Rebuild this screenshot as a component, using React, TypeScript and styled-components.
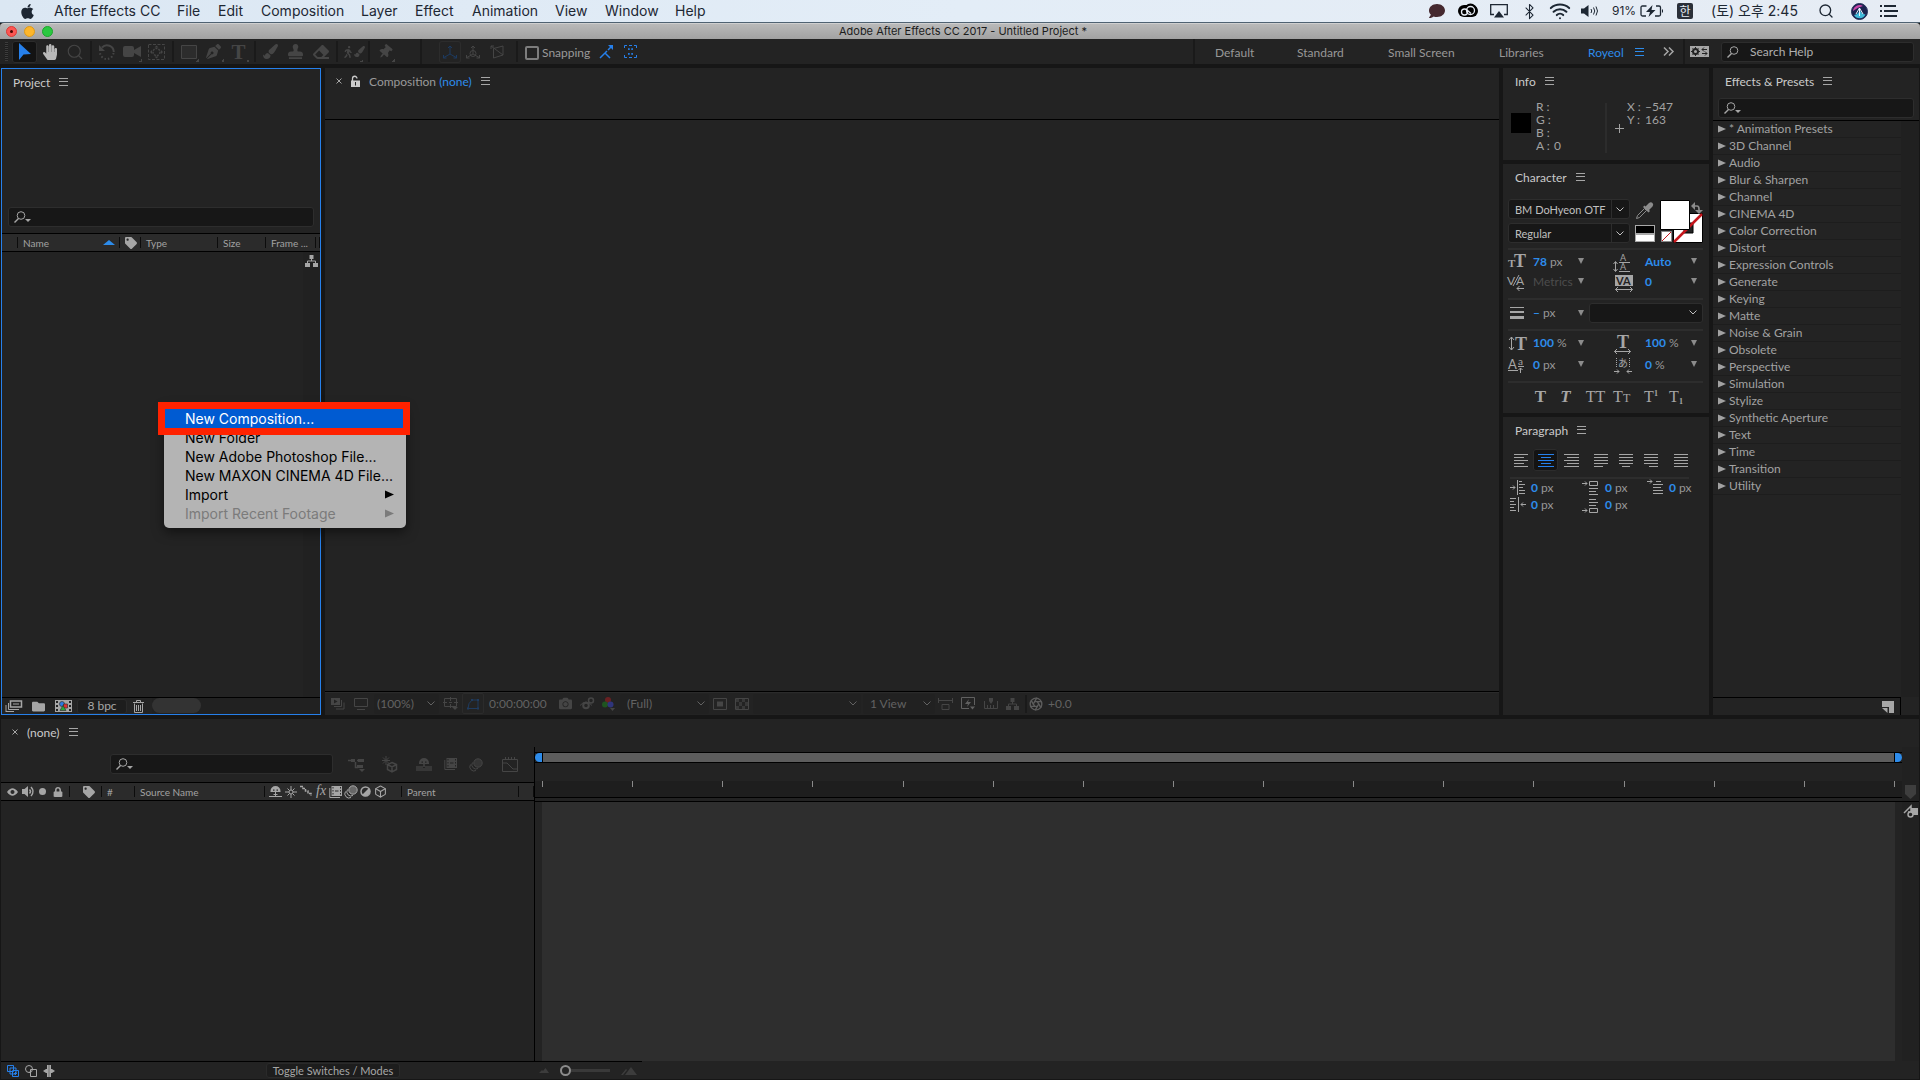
import React from 'react';
import styled, { createGlobalStyle, css } from 'styled-components';
import {
  FaApple,
  FaCamera,
  FaComment,
  FaEraser,
  FaFolder,
  FaHandPaper,
  FaLock,
  FaPaintBrush,
  FaPenNib,
  FaStamp,
  FaTag,
  FaThumbtack,
  FaWalking,
} from 'react-icons/fa';
import { Aperture, Bluetooth, Box, Search, Wifi } from 'lucide-react';

const c = {
  bg: '#232323',
  gutter: '#161616',
  field: '#171717',
  edge: '#2d2d2d',
  head: '#2b2b2b',
  black: '#000000',
  text: '#a2a2a2',
  bright: '#cacaca',
  icon: '#a6a6a6',
  off: '#454545',
  blue: '#2d8ceb',
};

const ui = `Lato, "Noto Sans", sans-serif`;
const mac = `Inter, "Noto Sans CJK KR", sans-serif`;

const GlobalStyle = createGlobalStyle`
  *, *::before, *::after { box-sizing: border-box; }
  body { margin: 0; background: ${c.gutter}; font-family: ${ui}; font-size: 12px; color: ${c.text}; }
  button, input, select { font: inherit; color: inherit; margin: 0; padding: 0; border: 0; background: none; outline: none; }
  ul { list-style: none; margin: 0; padding: 0; }
  h1, h2 { margin: 0; font-size: inherit; font-weight: inherit; }
  svg { display: block; flex: none; overflow: visible; }
`;

const Shell = styled.div`
  min-height: 100vh;
  display: flex;
  flex-direction: column;
`;

/* ---------- system menu bar ---------- */

const MenuBar = styled.header`
  height: 23px;
  display: flex;
  align-items: center;
  padding: 0 22px 0 19px;
  background: linear-gradient(90deg, #dbe7f3, #e3edf7 50%, #e6ecf4);
  border-bottom: 1px solid #4f6272;
  font: 14px/22px ${mac};
  color: #1d2733;
`;

const Menus = styled.nav`
  display: flex;
  gap: 19px;
  margin-left: 18px;
  flex: 1;
`;

const MenuButton = styled.button<{ $w: number }>`
  width: ${(p) => p.$w}px;
  text-align: left;
  white-space: nowrap;
`;

const Status = styled.div`
  display: flex;
  align-items: center;
`;

const Slot = styled.div<{ $w: number; $boxed?: boolean }>`
  width: ${(p) => p.$w}px;
  height: 21px;
  flex: none;
  display: flex;
  align-items: center;
  justify-content: center;
  ${(p) =>
    p.$boxed &&
    css`
      border: 1px solid #2b2b2b;
      border-radius: 2px;
    `}
`;

const Cell = styled.div`
  width: 15px;
  height: 16px;
  display: grid;
  place-items: center;
`;

const Percent = styled.span`
  width: 28px;
  font-size: 12px;
`;

const ImeBadge = styled.span`
  width: 16px;
  height: 16px;
  border-radius: 2px;
  background: #2a2f38;
  color: #e6ecf4;
  font: 12px/15px "Noto Sans CJK KR", sans-serif;
  text-align: center;
`;

const Clock = styled.span`
  width: 97px;
  text-align: center;
  white-space: nowrap;
`;

/* ---------- window title ---------- */

const TitleBar = styled.div`
  height: 16px;
  display: grid;
  grid-template-columns: 1fr auto 1fr;
  align-items: center;
  padding-left: 6px;
  background: linear-gradient(#b9b9b9, #a2a2a2);
  border-top: 1px solid #cfcfcf;
  border-radius: 4px 4px 0 0;
  font: 11px/15px ${mac};
  color: #1c1c1c;
`;

const Lights = styled.div`
  display: flex;
  gap: 7px;
`;

const Light = styled.button<{ $c: string; $e: string }>`
  width: 11px;
  height: 11px;
  border-radius: 50%;
  background: ${(p) => p.$c};
  border: 1px solid ${(p) => p.$e};
  display: grid;
  place-items: center;
`;

const Dot = styled.i`
  width: 3px;
  height: 3px;
  border-radius: 50%;
  background: #4a0502;
`;

/* ---------- tool bar ---------- */

const ToolBar = styled.div`
  height: 25px;
  display: flex;
  align-items: center;
  background: ${c.bg};
  padding: 0 6px 0 5px;
`;

const Grip = styled.div`
  width: 3px;
  height: 19px;
  margin-right: 4px;
  background: repeating-linear-gradient(#3c3c3c 0 1px, #1c1c1c 1px 2px);
`;

const Tool = styled.button<{ $on?: boolean; $w?: number; $c?: string; $ring?: boolean }>`
  width: ${(p) => p.$w ?? 25}px;
  height: 22px;
  flex: none;
  display: grid;
  place-items: center;
  color: ${(p) => p.$c ?? c.off};
  border-radius: 3px;
  ${(p) => (p.$on || p.$ring) && 'box-shadow: inset 0 0 0 1px #2c2c2c;'}
  ${(p) => p.$on && 'background: #131313;'}
`;

const Flyout = styled.span`
  display: grid;
  place-items: center;
  width: 21px;
  height: 20px;
  background: linear-gradient(135deg, transparent 50%, ${c.off} 50%) right bottom / 3px 3px no-repeat;
`;

const Letter = styled.span<{ $s: number; $italic?: boolean; $light?: boolean }>`
  font: ${(p) => (p.$italic ? 'italic' : 'normal')} ${(p) => (p.$light ? 400 : 700)} ${(p) => p.$s}px/20px
    "Liberation Serif", serif;
`;

const Sep = styled.div<{ $h?: number }>`
  width: 7px;
  height: ${(p) => p.$h ?? 21}px;
  flex: none;
  background: linear-gradient(#1a1a1a, #1a1a1a) 3px 0 / 2px 100% no-repeat;
`;

const Spacer = styled.div<{ $w?: number }>`
  ${(p) => (p.$w ? `width: ${p.$w}px; flex: none;` : 'flex: 1;')}
`;

const Check = styled.label`
  display: flex;
  align-items: center;
  gap: 3px;
  width: 71px;
  padding-top: 2px;
  font-size: 12px;
  color: #9a9a9a;
`;

const Tick = styled.input`
  appearance: none;
  width: 14px;
  height: 14px;
  flex: none;
  border: 2px solid #7d7d7d;
  border-radius: 2px;
`;

const Workspace = styled.button<{ $w: number; $on?: boolean }>`
  width: ${(p) => p.$w}px;
  padding-top: 2px;
  text-align: left;
  white-space: nowrap;
  color: ${(p) => (p.$on ? c.blue : '#989898')};
`;

const Field = styled.label<{ $w?: number }>`
  ${(p) => p.$w && `width: ${p.$w}px;`}
  height: 20px;
  display: flex;
  align-items: center;
  gap: 6px;
  padding-left: 5px;
  background: ${c.field};
  border: 1px solid ${c.edge};
  border-radius: 3px;
  color: ${c.icon};
`;

const TextInput = styled.input`
  flex: 1;
  min-width: 0;
  font-size: 12px;
  color: #b0b0b0;
  &::placeholder {
    color: #b0b0b0;
    opacity: 1;
  }
`;

/* ---------- panels ---------- */

const Workarea = styled.main`
  flex: 1;
  display: flex;
  flex-direction: column;
  gap: 4px;
  padding: 4px 1px 1px;
`;

const TopRow = styled.div`
  display: flex;
  gap: 4px;
  height: 60vh;
  min-height: 647px;
  max-height: 647px;
`;

const Panel = styled.section<{ $w?: number; $h?: number; $focus?: boolean }>`
  display: flex;
  flex-direction: column;
  background: ${c.bg};
  min-width: 0;
  ${(p) => (p.$w ? `width: ${p.$w}px; flex: none;` : p.$h ? `height: ${p.$h}px; flex: none;` : 'flex: 1;')}
  ${(p) => p.$focus && 'border: 1px solid #2680eb;'}
`;

const Column = styled.div`
  width: 206px;
  flex: none;
  display: flex;
  flex-direction: column;
  gap: 4px;
`;

const Tab = styled.div<{ $pad?: number }>`
  height: 26px;
  margin-bottom: 2px;
  flex: none;
  display: flex;
  align-items: center;
  gap: 9px;
  padding-left: ${(p) => p.$pad ?? 12}px;
  color: ${c.bright};
  font-size: 12px;
`;

const Blue = styled.span`
  color: ${c.blue};
`;

const Muted = styled.h2`
  color: #9a9a9a;
`;

const IconButton = styled.button<{ $c?: string }>`
  display: grid;
  place-items: center;
  color: ${(p) => p.$c ?? c.icon};
`;

const Rule = styled.hr<{ $inset?: boolean }>`
  width: auto;
  height: 2px;
  flex: none;
  margin: ${(p) => (p.$inset ? '0 14px 0 2px' : '0')};
  border: 0;
  background: #2d2d2d;
`;

const Line = styled.div`
  height: 1px;
  flex: none;
  background: ${c.black};
`;

/* ---------- project ---------- */

const ProjectSearch = styled.div`
  padding: 110px 6px 6px;
`;

const Table = styled.table`
  width: 100%;
  table-layout: fixed;
  border-collapse: collapse;
  background: ${c.head};
  border-top: 1px solid #000;
  border-bottom: 1px solid #000;
  font-size: 10px;
  color: ${c.text};
`;

const Th = styled.th<{ $w?: number; $pad?: number }>`
  height: 18px;
  padding: 0 0 0 ${(p) => p.$pad ?? 5}px;
  ${(p) => p.$w && `width: ${p.$w}px;`}
  font-weight: 400;
  text-align: left;
  white-space: nowrap;
  background: linear-gradient(#0c0c0c, #0c0c0c) right center / 1px 11px no-repeat;
`;

const HeadRow = styled.div`
  display: flex;
  align-items: center;
  justify-content: space-between;
  padding-right: 5px;
`;

const Bin = styled.div`
  flex: 1;
  display: flex;
  justify-content: flex-end;
`;

const ScrollStrip = styled.div`
  width: 17px;
  padding: 3px 0 0 2px;
  background: #212121;
  color: ${c.icon};
`;

const ProjectFoot = styled.div`
  height: 17px;
  flex: none;
  display: flex;
  align-items: center;
  padding-left: 3px;
  border-top: 1px solid #000;
  color: ${c.icon};
`;

const FootButton = styled.button<{ $w: number; $s: number }>`
  width: ${(p) => p.$w}px;
  height: 15px;
  background: #1d1d1d;
  border: 1px solid #2a2a2a;
  border-radius: 3px;
  line-height: 12px;
  font-size: ${(p) => p.$s}px;
`;

const Track = styled.div`
  flex: 1;
  height: 16px;
  margin-left: 8px;
  background: #212121;
`;

const Thumb = styled.div`
  width: 49px;
  height: 15px;
  border-radius: 8px;
  background: #333333;
`;

/* ---------- composition ---------- */

const Viewport = styled.div`
  flex: 1;
  margin-top: 23px;
  border-top: 1px solid #000;
`;

const ViewBar = styled.div`
  height: 24px;
  flex: none;
  display: flex;
  align-items: center;
  border-top: 1px solid #000;
  box-shadow: inset 0 1px 0 #2b2b2b;
  color: ${c.off};
  font-size: 12px;
`;

const SelectBox = styled.div<{ $w: number; $pad?: number }>`
  width: ${(p) => p.$w}px;
  height: 20px;
  flex: none;
  display: grid;
  grid-template-columns: 1fr 16px;
  align-items: center;
  border-radius: 3px;
  background: #212121;
  color: #626262;
  & > select {
    grid-area: 1 / 1 / 2 / 3;
    appearance: none;
    width: 100%;
    height: 100%;
    padding-left: ${(p) => p.$pad ?? 6}px;
  }
  & > svg {
    grid-area: 1 / 2;
    justify-self: center;
    pointer-events: none;
  }
`;

const DarkSelect = styled(SelectBox)<{ $split?: boolean }>`
  background: ${c.field};
  border: 1px solid ${c.edge};
  grid-template-columns: 1fr 18px;
  font-size: 11px;
  color: #c0c0c0;
  ${(p) =>
    p.$split &&
    css`
      background: linear-gradient(${c.edge}, ${c.edge}) calc(100% - 17px) 0 / 1px 100% no-repeat ${c.field};
    `}
`;

const Time = styled.button`
  width: 70px;
  text-align: left;
  padding-left: 5px;
  color: #626262;
`;

/* ---------- info ---------- */

const InfoBody = styled.div`
  display: grid;
  grid-template-columns: 25px 69px 10px 12px 1fr;
  padding: 4px 8px 0;
  font-size: 12px;
  line-height: 13px;
`;

const Swatch = styled.div`
  width: 20px;
  height: 20px;
  margin-top: 13px;
  background: #000;
`;

const Readout = styled.div`
  display: grid;
  grid-template-columns: 18px 1fr;
  align-content: start;
`;

const Divide = styled.div`
  width: 2px;
  height: 50px;
  margin-top: 3px;
  background: #2c2c2c;
`;

/* ---------- character ---------- */

const CharTop = styled.div`
  display: grid;
  grid-template-columns: 122px 20px 44px;
  column-gap: 5px;
  padding: 7px 5px 5px;
`;

const Stack = styled.div`
  display: flex;
  flex-direction: column;
  gap: 4px;
`;

const Body = styled.div`
  display: flex;
  flex-direction: column;
  padding: 0 6px 0 5px;
`;

const CharRow = styled.div<{ $h: number; $after?: number }>`
  height: ${(p) => p.$h}px;
  margin-bottom: ${(p) => p.$after ?? 0}px;
  display: grid;
  grid-template-columns: 25px 44px 14px 22px 32px 45px 14px;
  align-items: center;
  color: ${c.icon};
`;

const StrokeRow = styled.div`
  height: 25px;
  margin-bottom: 4px;
  display: grid;
  grid-template-columns: 25px 44px 12px 114px;
  align-items: center;
  color: ${c.icon};
`;

const Hot = styled.button<{ $off?: boolean }>`
  display: flex;
  gap: 3px;
  color: ${(p) => (p.$off ? '#4c4c4c' : '#989898')};
  font-size: 12px;
  white-space: nowrap;
  & > b {
    font-weight: 700;
    color: ${c.blue};
  }
`;

const Drop = styled.button`
  width: 8px;
  height: 12px;
  display: grid;
  place-items: center;
  &::after {
    content: '';
    border: 3px solid transparent;
    border-top: 6px solid #8c8c8c;
    border-bottom: 0;
  }
`;

const StyleRow = styled.div`
  display: flex;
  height: 28px;
  align-items: center;
  padding-left: 20px;
  color: ${c.icon};
`;

const AlignRow = styled.div`
  display: flex;
  align-items: center;
  height: 30px;
  margin-bottom: 2px;
  color: ${c.icon};
`;

const ParaGrid = styled.div`
  display: grid;
  grid-template-columns: 21px 51px 23px 42px 22px 1fr;
  grid-auto-rows: 17px;
  align-items: center;
  padding-left: 2px;
  color: ${c.icon};
`;

/* ---------- effects ---------- */

const EffectsSearch = styled.div`
  padding: 2px 5px 2px;
`;

const EffectsMain = styled.div`
  flex: 1;
  display: flex;
  border-top: 1px solid #000;
`;

const EffectList = styled.ul`
  flex: 1;
`;

const Effect = styled.li`
  height: 17px;
  border-bottom: 1px solid #1d1d1d;
  & > button {
    display: flex;
    align-items: center;
    gap: 3px;
    height: 16px;
    padding-left: 5px;
    line-height: 16px;
    white-space: nowrap;
  }
`;

const Strip = styled.div`
  width: 18px;
  background: #202020;
`;

const EffectsFoot = styled.div`
  height: 18px;
  margin-right: 18px;
  display: flex;
  justify-content: flex-end;
  padding: 1px 6px 0 0;
  border-top: 1px solid #000;
  border-right: 1px solid #000;
  color: ${c.icon};
`;

/* ---------- timeline ---------- */

const Timeline = styled.section`
  flex: 1;
  display: flex;
  flex-direction: column;
  background: ${c.bg};
`;

const Split = styled.div`
  flex: 1;
  display: grid;
  grid-template-columns: 533px 1fr 17px;
`;

const Layers = styled.div`
  display: flex;
  flex-direction: column;
`;

const LayerTools = styled.div`
  height: 34px;
  margin-bottom: 1px;
  display: flex;
  align-items: center;
  padding-left: 109px;
  color: ${c.off};
`;

const LayerField = styled(Field)`
  margin-right: 11px;
`;

const Icons = styled.div<{ $gap: number; $c?: string }>`
  display: flex;
  align-items: center;
  gap: ${(p) => p.$gap}px;
  color: ${(p) => p.$c ?? c.icon};
`;

const TimeArea = styled.div`
  display: flex;
  flex-direction: column;
  border-left: 1px solid #000;
`;

const WorkArea = styled.div`
  height: 11px;
  margin-top: 5px;
  display: grid;
  grid-template-columns: 7px 1fr 7px;
  align-items: stretch;
  border-top: 1px solid #000;
  border-bottom: 1px solid #000;
`;

const Handle = styled.button<{ $end?: boolean }>`
  background: ${c.blue};
  border-radius: ${(p) => (p.$end ? '0 5px 5px 0' : '5px 0 0 5px')};
`;

const Span = styled.div`
  background: #5d5d5d;
  border: solid #000;
  border-width: 0 1px;
`;

const Ruler = styled.div`
  height: 17px;
  margin-top: 18px;
  padding: 0 7px;
  display: flex;
  justify-content: space-between;
  background: #1e1e1e;
  border-bottom: 1px solid #000;
`;

const Mark = styled.i`
  width: 1px;
  height: 6px;
  background: #8a8a8a;
`;

const Lanes = styled.div`
  flex: 1;
  margin-top: 3px;
  padding: 0 7px;
  border-top: 1px solid #000;
  background: #2e2e2e content-box;
`;

const Edge = styled.div`
  display: flex;
  flex-direction: column;
  padding-top: 35px;
  background: #212121;
`;

const EdgeCell = styled.div<{ $c?: string }>`
  height: 19px;
  display: grid;
  place-items: center;
  color: ${(p) => p.$c ?? c.icon};
`;

const TimelineFoot = styled.div`
  height: 18px;
  width: 641px;
  display: flex;
  align-items: center;
  border-top: 1px solid #000;
  padding-left: 6px;
  color: ${c.icon};
`;

const Range = styled.input`
  appearance: none;
  width: 50px;
  height: 12px;
  margin: 0 11px;
  background: linear-gradient(#393939, #393939) center / 100% 3px no-repeat;
  &::-webkit-slider-thumb {
    appearance: none;
    width: 11px;
    height: 11px;
    border: 2px solid #8c8c8c;
    border-radius: 50%;
    background: ${c.bg};
  }
`;

/* ---------- context menu ---------- */

const ContextMenu = styled.div`
  position: absolute;
  left: 164px;
  top: 405px;
  width: 242px;
  padding: 4px 0 5px;
  background: #b4b4b4;
  border-radius: 5px;
  box-shadow: 0 4px 12px rgba(0, 0, 0, 0.5);
  font: 14px/20px ${mac};
`;

const ContextItem = styled.button<{ $on?: boolean; $off?: boolean }>`
  width: 100%;
  height: 19px;
  display: flex;
  align-items: center;
  justify-content: space-between;
  padding: 0 12px 0 21px;
  white-space: nowrap;
  color: ${(p) => (p.$on ? '#fff' : p.$off ? '#7b7b7b' : '#000')};
  background: ${(p) => (p.$on ? '#005bd2' : 'transparent')};
`;

const Highlight = styled.div`
  position: absolute;
  left: 158px;
  top: 402px;
  width: 252px;
  height: 33px;
  border: 7px solid #ff2200;
  pointer-events: none;
`;

/* ---------- drawings ---------- */

type G = { w: number; h: number; children: React.ReactNode; sw?: number };
const Glyph = ({ w, h, children, sw = 1 }: G) => (
  <svg width={w} height={h} viewBox={`0 0 ${w} ${h}`} fill="none" stroke="currentColor" strokeWidth={sw} aria-hidden>
    {children}
  </svg>
);
const F = { fill: 'currentColor', stroke: 'none' };

const Burger = () => (
  <Glyph w={9} h={8}>
    <path d="M0 .5h9M0 3.5h9M0 7.5h9" />
  </Glyph>
);
const MenuIcon = ({ label }: { label: string }) => (
  <IconButton aria-label={label}>
    <Burger />
  </IconButton>
);
const Close = () => (
  <Glyph w={6} h={6}>
    <path d="M.5 .5l5 5M5.5 .5l-5 5" />
  </Glyph>
);
const Chevron = () => (
  <Glyph w={8} h={5}>
    <path d="M.5 .5L4 4L7.5 .5" />
  </Glyph>
);
const Lens = ({ arrow }: { arrow?: boolean }) => (
  <Glyph w={17} h={12}>
    <circle cx="7" cy="4.5" r="3.8" />
    <path d="M4.5 7.5L.5 11.5" strokeWidth={1.4} />
    {arrow && <path d="M11 8h6l-3 3z" {...F} />}
  </Glyph>
);
const Tri = ({ s = 7 }: { s?: number }) => (
  <Glyph w={s + 1} h={s + 1}>
    <path d={`M0 .5v${s}l${s + 1}-${s / 2}z`} {...F} />
  </Glyph>
);
const Tree = () => (
  <Glyph w={13} h={12}>
    <path d="M4.5 0h4v4h-4zM0 8h5v4H0zM8 8h5v4H8z" {...F} />
    <path d="M6.5 4v2M2.5 8V6h8v2" />
  </Glyph>
);
const Film = () => (
  <Glyph w={17} h={12}>
    <path fillRule="evenodd" d="M0 0h17v12H0zM1 1v2h2V1zM1 5v2h2V5zM1 9v2h2V9zM14 1v2h2V1zM14 5v2h2V5zM14 9v2h2V9z" {...F} />
    <circle cx="7" cy="4" r="2.500" fill="#2d7be0" stroke="#333" strokeWidth={0.7} />
    <path d="M8.500 4h4v4h-4z" fill="#e03030" stroke="#333" strokeWidth={0.7} />
    <path d="M5 10.500L8 5.500l3 5z" fill="#28a838" stroke="#333" strokeWidth={0.7} />
  </Glyph>
);
const FilmStack = () => (
  <Glyph w={13} h={12}>
    <path fillRule="evenodd" d="M2.500 0H13v10H2.500zM3.500 1v1.500h1V1zM3.500 4v1.500h1V4zM3.500 7v1.500h1V7zM11 1v1.500h1V1zM11 4v1.500h1V4zM11 7v1.500h1V7zM6 4.500v1h3.500v-1z" {...F} />
    <path d="M.800 2v9.500H11" />
  </Glyph>
);
const Blur = () => (
  <Glyph w={14} h={13}>
    <circle cx="9" cy="5" r="4.2" fill="currentColor" fillOpacity=".5" />
    <path d="M3.5 4.5A4.2 4.2 0 0 0 9 10.5M1.500 6.500A4.2 4.2 0 0 0 7 12.500" />
  </Glyph>
);
const Shy = () => (
  <Glyph w={13} h={11}>
    <path fillRule="evenodd" d="M1.500 5a5 5 0 0 1 10 0v1h-10zM4 3.500v1.200h1.500V3.500zM7.500 3.500v1.200H9V3.500z" {...F} />
    <path d="M6.5 5v6M4.500 8.500h4M0 10.500h13" />
  </Glyph>
);

const bars = (rows: [number, number][]) => (
  <Glyph w={16} h={13}>
    {rows.map(([a, b], i) => (
      <path key={i} d={`M${a} ${i * 3 + 0.5}H${b}`} />
    ))}
  </Glyph>
);
const aligns: { name: string; rows: [number, number][] }[] = [
  { name: 'Left align text', rows: [[1, 15], [1, 11], [1, 15], [1, 11], [1, 15]] },
  { name: 'Center text', rows: [[0, 16], [3, 13], [0, 16], [3, 13], [0, 16]] },
  { name: 'Right align text', rows: [[1, 16], [4, 16], [1, 16], [4, 16], [1, 16]] },
  { name: 'Justify last left', rows: [[1, 15], [1, 15], [1, 15], [1, 15], [1, 10]] },
  { name: 'Justify last centered', rows: [[1, 15], [1, 15], [1, 15], [1, 15], [4, 12]] },
  { name: 'Justify last right', rows: [[1, 15], [1, 15], [1, 15], [1, 15], [6, 15]] },
  { name: 'Justify all', rows: [[1, 15], [1, 15], [1, 15], [1, 15], [1, 15]] },
];

const Tx = ({ x, y, s, children, b = true, sans }: { x: number; y: number; s: number; children: string; b?: boolean; sans?: boolean }) => (
  <text
    x={x}
    y={y}
    fontSize={s}
    fontWeight={b ? 700 : 400}
    fontFamily={sans ? 'Lato, "Noto Sans CJK JP", sans-serif' : '"Liberation Serif", serif'}
    fill="currentColor"
    stroke="none"
  >
    {children}
  </text>
);

const menus: [string, number][] = [
  ['After Effects CC', 104],
  ['File', 22],
  ['Edit', 24],
  ['Composition', 81],
  ['Layer', 35],
  ['Effect', 38],
  ['Animation', 64],
  ['View', 31],
  ['Window', 51],
  ['Help', 30],
];

const effects = [
  '* Animation Presets',
  '3D Channel',
  'Audio',
  'Blur & Sharpen',
  'Channel',
  'CINEMA 4D',
  'Color Correction',
  'Distort',
  'Expression Controls',
  'Generate',
  'Keying',
  'Matte',
  'Noise & Grain',
  'Obsolete',
  'Perspective',
  'Simulation',
  'Stylize',
  'Synthetic Aperture',
  'Text',
  'Time',
  'Transition',
  'Utility',
];

const SystemBar = () => (
  <MenuBar>
    <FaApple size={17} />
    <Menus>
      {menus.map(([m, w]) => (
        <MenuButton key={m} $w={w}>
          {m}
        </MenuButton>
      ))}
    </Menus>
    <Status>
      <Slot $w={28}>
        <FaComment size={16} color="#45292f" />
      </Slot>
      <Slot $w={33}>
        <Glyph w={20} h={14}>
          <path d="M6 1h8a6 6 0 0 1 0 12H6A6 6 0 0 1 6 1z" fill="#000" stroke="none" />
          <circle cx="12.500" cy="6" r="6.500" fill="#000" stroke="none" />
          <circle cx="6.500" cy="8" r="3" stroke="#e6ecf4" strokeWidth={1.3} />
          <circle cx="12.500" cy="6.500" r="4" stroke="#e6ecf4" strokeWidth={1.3} />
          <path d="M9 6l4 3.500" stroke="#e6ecf4" strokeWidth={1.3} />
        </Glyph>
      </Slot>
      <Slot $w={30}>
        <Glyph w={18} h={14} sw={1.3}>
          <path d="M4 10.5H.7V.7h16.6v9.8H14" />
          <path d="M9 7l5 6.5H4z" {...F} />
        </Glyph>
      </Slot>
      <Slot $w={30}>
        <Bluetooth size={17} strokeWidth={1.5} />
      </Slot>
      <Slot $w={32}>
        <Wifi size={22} strokeWidth={2.2} />
      </Slot>
      <Slot $w={26}>
        <Glyph w={17} h={12}>
          <path d="M0 3.5h3L7.5 0v12L3 8.5H0z" {...F} />
          <path d="M10 4q1.500 2 0 4M12.500 2.500q2.500 3.500 0 7M15 1.500q3 4.500 0 9" />
        </Glyph>
      </Slot>
      <Spacer $w={10} />
      <Percent>91%</Percent>
      <Slot $w={24}>
        <Glyph w={24} h={12}>
          <path d="M6.5 1H2.5Q1 1 1 2.5v7Q1 11 2.5 11H6M16 1h3q1.500 0 1.500 1.500v7Q20.500 11 19 11h-4" strokeWidth={1.3} />
          <path d="M12.500 0L6 7h4l-1.500 5L15.500 5h-4z" {...F} />
          <path d="M22.500 4.500v3" />
        </Glyph>
      </Slot>
      <Slot $w={42}>
        <ImeBadge>한</ImeBadge>
      </Slot>
      <Clock>(토) 오후 2:45</Clock>
      <Slot $w={46}>
        <Search size={16} strokeWidth={2} />
      </Slot>
      <Slot $w={20}>
        <Glyph w={17} h={17}>
          <circle cx="8.5" cy="8.5" r="8" fill="#1b2350" stroke="#26305a" />
          <path d="M2 8a6.5 6.500 0 0 1 10-5Q7 4 2 8z" fill="#c845a8" stroke="none" />
          <path d="M3 12q6-1 5.500-7 1 6 6 6.500a6.5 6.500 0 0 1-11.500.5z" fill="#3fb9d8" stroke="none" />
          <path d="M8.500 5l-3.500 6M8.500 5l3.500 6M8.500 5v8" stroke="#e8f4ff" />
        </Glyph>
      </Slot>
      <Spacer $w={11} />
      <Glyph w={18} h={12} sw={2}>
        <path d="M4 1h12M4 6h14M4 11h13" />
        <path d="M0 1h2M0 6h2M0 11h2" />
      </Glyph>
    </Status>
  </MenuBar>
);

const Tools = () => (
  <ToolBar>
    <Grip />
    <Tool $on aria-label="Selection">
      <Glyph w={13} h={17}>
        <path d="M1 0v17l4.500-5.500L13 11z" fill="#2680eb" stroke="none" />
      </Glyph>
    </Tool>
    <Tool $c="#b9b9b9" aria-label="Hand">
      <FaHandPaper size={16} />
    </Tool>
    <Tool aria-label="Zoom">
      <Search size={18} strokeWidth={1.5} />
    </Tool>
    <Sep />
    <Tool aria-label="Rotate">
      <Glyph w={18} h={18} sw={2}>
        <path d="M4 4.5A6.8 6.800 0 0 1 15.800 9" />
        <path d="M15.500 10A6.800 6.800 0 0 1 2 10" strokeDasharray="1.5 2" />
        <path d="M1 2v6h6z" {...F} />
      </Glyph>
    </Tool>
    <Tool aria-label="Camera">
      <Flyout>
        <Glyph w={18} h={12}>
          <path d="M0 2q0-2 2-2h7q2 0 2 2v2l7-4v11l-7-4v2q0 2-2 2H2q-2 0-2-2z" {...F} />
        </Glyph>
      </Flyout>
    </Tool>
    <Tool aria-label="Pan behind">
      <Glyph w={17} h={16}>
        <path d="M.5 .5h16v15H.5z" strokeDasharray="3 1.5" />
        <circle cx="8.5" cy="8" r="3.5" strokeDasharray="2 1" strokeWidth={1.5} />
        <path d="M8.500 1.500l2 2h-4zM8.500 14.500l2-2h-4zM2 8l2-2v4zM15 8l-2-2v4z" {...F} />
      </Glyph>
    </Tool>
    <Sep />
    <Tool aria-label="Rectangle">
      <Flyout>
        <Glyph w={16} h={14}>
          <path d="M.5 .5h15v13H.5z" fill="#2c2c2c" />
        </Glyph>
      </Flyout>
    </Tool>
    <Tool aria-label="Pen">
      <Flyout>
        <FaPenNib size={15} />
      </Flyout>
    </Tool>
    <Tool aria-label="Type">
      <Flyout>
        <Letter $s={21}>T</Letter>
      </Flyout>
    </Tool>
    <Sep />
    <Tool aria-label="Brush">
      <FaPaintBrush size={15} />
    </Tool>
    <Tool aria-label="Clone stamp">
      <FaStamp size={15} />
    </Tool>
    <Tool aria-label="Eraser">
      <FaEraser size={16} />
    </Tool>
    <Sep />
    <Tool aria-label="Roto brush">
      <Flyout>
        <Icons $gap={0} $c={c.off}>
          <FaWalking size={12} />
          <FaPaintBrush size={11} />
        </Icons>
      </Flyout>
    </Tool>
    <Sep />
    <Tool aria-label="Puppet pin">
      <Flyout>
        <FaThumbtack size={14} transform="rotate(40)" />
      </Flyout>
    </Tool>
    <Spacer $w={20} />
    <Sep $h={25} />
    <Spacer $w={15} />
    <Tool $w={22} $c="#1c3a60" $ring aria-label="Local axis">
      <Glyph w={16} h={14}>
        <path d="M8 1v8L1 13M8 9l7 4M6 3l2-2 2 2M1.500 10v3h3M14.500 10v3h-3" />
      </Glyph>
    </Tool>
    <Tool $w={24} aria-label="World axis">
      <Glyph w={16} h={14}>
        <path d="M8 1v8L1 13M8 9l7 4M6 3l2-2 2 2M1.500 10v3h3M14.500 10v3h-3" />
        <circle cx="8" cy="8.5" r="3" />
      </Glyph>
    </Tool>
    <Tool $w={23} aria-label="View axis">
      <Glyph w={14} h={14}>
        <path d="M3.500 3.500L13 1v9L3.500 13zM13 10L1 1M1 4V1h3" />
      </Glyph>
    </Tool>
    <Spacer $w={5} />
    <Sep />
    <Spacer $w={5} />
    <Check>
      <Tick type="checkbox" />
      Snapping
    </Check>
    <Tool $w={20} $c="#2680eb" aria-label="Snap to edges">
      <Glyph w={14} h={14} sw={1.5}>
        <path d="M1 13l5-5 5 5M6 8l2-2M9 5l3-3" />
        <path d="M9 0h5v5z" {...F} />
      </Glyph>
    </Tool>
    <Spacer $w={2} />
    <Tool $c="#2680eb" aria-label="Snap to features">
      <Glyph w={13} h={13}>
        <path d="M.5 3V.5H3M5 .5h3M10 .5h2.500V3M12.500 10v2.500H10M8 12.500H5M3 12.500H.5V10" />
        <path d="M4 4h1v1M9 4H8v1M4 9h1V8M9 9H8V8" strokeWidth={1.4} />
      </Glyph>
    </Tool>
    <Spacer />
    <Sep $h={25} />
    <Spacer $w={18} />
    <Workspace $w={82}>Default</Workspace>
    <Workspace $w={91}>Standard</Workspace>
    <Workspace $w={111}>Small Screen</Workspace>
    <Workspace $w={89}>Libraries</Workspace>
    <Workspace $w={47} $on>
      Royeol
    </Workspace>
    <IconButton $c={c.blue} aria-label="Workspace menu">
      <Burger />
    </IconButton>
    <Spacer $w={19} />
    <IconButton aria-label="More workspaces">
      <Glyph w={11} h={9} sw={1.5}>
        <path d="M1 .5l4 4-4 4M6 .5l4 4-4 4" />
      </Glyph>
    </IconButton>
    <Spacer $w={6} />
    <Sep $h={25} />
    <Spacer $w={3} />
    <IconButton aria-label="Sync settings">
      <Glyph w={19} h={11}>
        <path d="M0 0h19v11H0z" {...F} />
        <circle cx="5.5" cy="5.5" r="2.5" stroke="#232323" strokeWidth={2} />
        <path d="M5.500 1v2M5.500 8v2M1 5.500h2M8 5.500h2M2.500 2.500l1 1M8.500 2.500l-1 1M2.500 8.500l1-1M8.500 8.500l-1-1" stroke="#232323" />
        <path d="M12 3.500h5M14 1.500l-2 2 2 2M12 7.500h5M15 5.500l2 2-2 2" stroke="#232323" />
      </Glyph>
    </IconButton>
    <Spacer $w={12} />
    <Field $w={193}>
      <Lens />
      <TextInput type="search" aria-label="Search Help" placeholder="Search Help" />
    </Field>
  </ToolBar>
);

const Project = () => (
  <Panel $w={320} $focus>
    <Tab $pad={11}>
      <h2>Project</h2>
      <MenuIcon label="Project menu" />
    </Tab>
    <ProjectSearch>
      <Field>
        <Lens arrow />
        <TextInput type="search" aria-label="Search project" />
      </Field>
    </ProjectSearch>
    <Table>
      <thead>
        <tr>
          <Th $w={16} aria-label="Expand" />
          <Th $w={102}>
            <HeadRow>
              Name
              <Glyph w={12} h={5}>
                <path d="M0 5L6 0l6 5z" fill="#2d8ceb" stroke="none" />
              </Glyph>
            </HeadRow>
          </Th>
          <Th $w={21} aria-label="Label">
            <FaTag size={12} color={c.icon} />
          </Th>
          <Th $w={77}>Type</Th>
          <Th $w={48}>Size</Th>
          <Th $w={50}>Frame ...</Th>
          <Th aria-label="More" />
        </tr>
      </thead>
    </Table>
    <Bin>
      <ScrollStrip>
        <Tree />
      </ScrollStrip>
    </Bin>
    <ProjectFoot>
      <Icons $gap={10}>
        <IconButton aria-label="Interpret footage">
          <Glyph w={17} h={12}>
            <path d="M5.500 1h11v6h-11z" strokeWidth={1.5} />
            <path d="M8 4h6M3.500 3v6.500H14M1 5v7M1 11.500h8" />
          </Glyph>
        </IconButton>
        <IconButton aria-label="New folder">
          <FaFolder size={13} />
        </IconButton>
        <IconButton aria-label="New composition">
          <Film />
        </IconButton>
      </Icons>
      <Spacer $w={5} />
      <FootButton $w={50} $s={12}>
        8 bpc
      </FootButton>
      <Spacer $w={6} />
      <IconButton aria-label="Delete">
        <Glyph w={11} h={13}>
          <path d="M1.500 3.500v9h8v-9M0 2.500h11M3.500 2V.5h4V2M3.500 5v6M5.500 5v6M7.500 5v6" />
        </Glyph>
      </IconButton>
      <Track>
        <Thumb />
      </Track>
    </ProjectFoot>
  </Panel>
);

const Pick = ({ w, label, value, pad }: { w: number; label: string; value: string; pad?: number }) => (
  <SelectBox $w={w} $pad={pad}>
    <select aria-label={label} defaultValue={value}>
      <option>{value}</option>
    </select>
    <Chevron />
  </SelectBox>
);

const Composition = () => (
  <Panel>
    <Tab $pad={11}>
      <IconButton aria-label="Close composition">
        <Close />
      </IconButton>
      <Glyph w={9} h={11}>
        <path d="M1.500 5V2.500a2.200 2.200 0 0 1 4.500 0" strokeWidth={1.3} />
        <path fillRule="evenodd" d="M0 4.500h9V11H0zM4 6v3.500h1V6z" {...F} />
      </Glyph>
      <Muted>
        Composition <Blue>(none)</Blue>
      </Muted>
      <MenuIcon label="Composition menu" />
    </Tab>
    <Viewport />
    <ViewBar>
      <Slot $w={25}>
        <Glyph w={14} h={12}>
          <path fillRule="evenodd" d="M0 0h9v7H0zM3 1.500v4l3.500-2z" {...F} />
          <path d="M3 8.500h7.500V2M5 11h8V4.500" />
        </Glyph>
      </Slot>
      <Slot $w={22}>
        <Glyph w={14} h={12}>
          <path d="M.5 .5h13v8H.5zM3 11.500h8" />
        </Glyph>
      </Slot>
      <Spacer $w={2} />
      <Pick w={65} label="Magnification" value="(100%)" pad={3} />
      <Slot $w={23}>
        <Glyph w={15} h={13}>
          <path d="M1.500 1.500h12v8h-12zM7.500 0v4M7.500 7v4M0 5.500h4M11 5.500h4M6 5.500h3" />
          <path d="M9 10h6l-3 3z" {...F} />
        </Glyph>
      </Slot>
      <Slot $w={22} $boxed>
        <Glyph w={14} h={12}>
          <path d="M2 10.500Q2 5 6 2h6v8.500z" stroke="#1f3b5e" />
          <path d="M1 9.500h2v2H1zM5 1h2v2H5zM11 1h2v2h-2zM11 9.500h2v2h-2z" fill="#1f3b5e" stroke="none" />
        </Glyph>
      </Slot>
      <Time>0:00:00:00</Time>
      <Slot $w={22}>
        <FaCamera size={13} />
      </Slot>
      <Slot $w={22}>
        <Glyph w={15} h={13}>
          <circle cx="6" cy="8.5" r="2.8" strokeWidth={2} />
          <path d="M0 8.500q6-7 12 0" />
          <circle cx="11" cy="3.5" r="2.5" strokeWidth={1.5} />
        </Glyph>
      </Slot>
      <Slot $w={22}>
        <Glyph w={14} h={14}>
          <circle cx="6" cy="3" r="3" fill="#6a2022" stroke="none" />
          <circle cx="3" cy="7.5" r="3" fill="#1f5420" stroke="none" />
          <circle cx="8.5" cy="7.5" r="3" fill="#2f357c" stroke="none" />
          <path d="M8 11h5l-2.500 3z" {...F} />
        </Glyph>
      </Slot>
      <Pick w={89} label="Resolution" value="(Full)" pad={7} />
      <Slot $w={22}>
        <Glyph w={14} h={12}>
          <path d="M.5 .5h13v11H.5z" />
          <path d="M4 3.500h6v5H4z" {...F} />
        </Glyph>
      </Slot>
      <Slot $w={22}>
        <Glyph w={14} h={12}>
          <path d="M.5 .5h13v11H.5z" />
          <path d="M1 1h3v3H1zM7 1h3v3H7zM4 4h3v4H4zM10 4h3v4h-3zM1 8h3v3H1zM7 8h3v3H7z" fill="#383838" stroke="none" />
        </Glyph>
      </Slot>
      <Pick w={108} label="Camera view" value="" />
      <Spacer $w={2} />
      <Pick w={72} label="View layout" value="1 View" pad={7} />
      <Slot $w={21}>
        <Glyph w={15} h={12}>
          <path d="M4 6.500h7v5H4zM0 2.500h15M.5 0v5M14.500 0v5" />
        </Glyph>
      </Slot>
      <Slot $w={24}>
        <Glyph w={14} h={13}>
          <path d="M8 11.500H.5V.5h13V8" stroke="#606060" />
          <path d="M8 2L4 7h3l-1 3 4-5H7zM9 9.500h5l-2.500 3z" fill="#606060" stroke="none" />
        </Glyph>
      </Slot>
      <Slot $w={22}>
        <Glyph w={14} h={11}>
          <path d="M.5 3v7.500h13V3M3.500 10V7M6.500 10V7M9.500 10V7" />
          <path d="M5 0h4v3L7 6 5 3z" {...F} />
        </Glyph>
      </Slot>
      <Slot $w={20}>
        <Tree />
      </Slot>
      <Sep $h={18} />
      <Slot $w={14}>
        <Aperture size={14} strokeWidth={2.4} color="#5c5c5c" />
      </Slot>
      <Time>+0.0</Time>
    </ViewBar>
  </Panel>
);

const Info = () => (
  <Panel $h={92}>
    <Tab>
      <h2>Info</h2>
      <MenuIcon label="Info menu" />
    </Tab>
    <InfoBody>
      <Swatch />
      <Readout>
        <span>R :</span>
        <span />
        <span>G :</span>
        <span />
        <span>B :</span>
        <span />
        <span>A :</span>
        <span>0</span>
      </Readout>
      <Divide />
      <Glyph w={9} h={44}>
        <path d="M4.500 24v9M0 28.500h9" />
      </Glyph>
      <Readout>
        <span>X :</span>
        <span>–547</span>
        <span>Y :</span>
        <span>163</span>
      </Readout>
    </InfoBody>
  </Panel>
);

const DarkPick = ({ w, label, value, split }: { w: number; label: string; value: string; split?: boolean }) => (
  <DarkSelect $w={w} $split={split}>
    <select aria-label={label} defaultValue={value}>
      <option>{value}</option>
    </select>
    <Chevron />
  </DarkSelect>
);

const Val = ({ n, u, off, label }: { n?: string; u?: string; off?: boolean; label: string }) => (
  <Hot $off={off} aria-label={label}>
    {n && <b>{n}</b>}
    {u}
  </Hot>
);

const Character = () => (
  <Panel $h={249}>
    <Tab>
      <h2>Character</h2>
      <MenuIcon label="Character menu" />
    </Tab>
    <CharTop>
      <Stack>
        <DarkPick w={122} label="Font family" value="BM DoHyeon OTF" split />
        <DarkPick w={122} label="Font style" value="Regular" split />
      </Stack>
      <Glyph w={20} h={43}>
        <path d="M1.500 19.500l1-3 7-7 2 2-7 7z" stroke="#8c8c8c" />
        <path d="M8 8l1.500-1.500 1 1L14 4q2-1.500 3.500 0t0 3.500L14 11l1 1-1.500 1.500z" fill="#8c8c8c" stroke="none" />
        <path d="M0 26h20v17H0z" fill="#a8a8a8" stroke="none" />
        <path d="M1 27h18v7H1z" fill="#000" stroke="none" />
        <path d="M1 36h18v6H1z" fill="#fff" stroke="none" />
      </Glyph>
      <Glyph w={44} h={44}>
        <path d="M13.500 14.500h29v29h-29z" fill="#fff" stroke="#000" />
        <path d="M24 24h9v10h-9z" fill="#232323" stroke="#000" />
        <path d="M14 43L42 15" stroke="#c4161c" strokeWidth={2.5} />
        <path d="M.5 1.500h29v29H.5z" fill="#fff" stroke="#000" />
        <path d="M1.500 32.500h10v10h-10z" fill="#fff" stroke="#8a8a8a" />
        <path d="M2 42L11 33" stroke="#c4161c" />
        <path d="M33 7h4q2 0 2 3v2" stroke="#8c8c8c" strokeWidth={1.7} />
        <path d="M31 7l4-4v8zM35 11h8l-4 4z" fill="#8c8c8c" stroke="none" />
      </Glyph>
    </CharTop>
    <Body>
      <Rule />
      <CharRow $h={22}>
        <Glyph w={18} h={16}>
          <Tx x={0} y={14} s={11}>T</Tx>
          <Tx x={6} y={14} s={18}>T</Tx>
        </Glyph>
        <Val n="78" u="px" label="Font size" />
        <Drop aria-label="Font size presets" />
        <span />
        <Glyph w={18} h={16}>
          <Tx x={7} y={8} s={9} b={false} sans>A</Tx>
          <Tx x={7} y={17} s={9} b={false} sans>A</Tx>
          <path d="M6 9.500h11M6 18.500h11M2.500 9v9M.5 11l2-2.500 2 2.500M.5 16l2 2.500 2-2.500" />
        </Glyph>
        <Val n="Auto" label="Leading" />
        <Drop aria-label="Leading presets" />
      </CharRow>
      <CharRow $h={18} $after={8}>
        <Glyph w={18} h={16}>
          <Tx x={-1} y={12} s={12} b={false} sans>V</Tx>
          <Tx x={8} y={12} s={12} b={false} sans>A</Tx>
          <path d="M11 2L5 13M9 15.500h7M11.500 13l-2.500 2.500 2.500 2.500" />
        </Glyph>
        <Val u="Metrics" off label="Kerning" />
        <Drop aria-label="Kerning presets" />
        <span />
        <Glyph w={20} h={16}>
          <path d="M2 2h18v11H2z" {...F} />
          <text x="3" y="12" fontSize="11" fontWeight="700" fontFamily="Lato, sans-serif" fill="#232323" stroke="none">VA</text>
          <path d="M2.500 16.500h17M5 14l-2.500 2.500L5 19M17 14l2.500 2.500L17 19" />
        </Glyph>
        <Val n="0" label="Tracking" />
        <Drop aria-label="Tracking presets" />
      </CharRow>
      <Rule />
      <StrokeRow>
        <Glyph w={18} h={12}>
          <path d="M2 .5h14" />
          <path d="M2 5h14" strokeWidth={2} />
          <path d="M2 10.500h14" strokeWidth={3} />
        </Glyph>
        <Val n="–" u="px" label="Stroke width" />
        <Drop aria-label="Stroke width presets" />
        <DarkPick w={114} label="Stroke order" value="" />
      </StrokeRow>
      <Rule />
      <CharRow $h={23}>
        <Glyph w={19} h={16}>
          <Tx x={7} y={15} s={18}>T</Tx>
          <path d="M3.500 2v13M1 5l2.500-3L6 5M1 12l2.500 3L6 12" />
        </Glyph>
        <Val n="100" u="%" label="Vertical scale" />
        <Drop aria-label="Vertical scale presets" />
        <span />
        <Glyph w={18} h={16}>
          <Tx x={4} y={13} s={18}>T</Tx>
          <path d="M1.500 16.500h16M4 14l-2.500 2.500L4 19M15 14l2.500 2.500L15 19" />
        </Glyph>
        <Val n="100" u="%" label="Horizontal scale" />
        <Drop aria-label="Horizontal scale presets" />
      </CharRow>
      <CharRow $h={20} $after={7}>
        <Glyph w={18} h={14}>
          <Tx x={0} y={12} s={13} b={false} sans>A</Tx>
          <Tx x={10} y={8} s={10} b={false} sans>a</Tx>
          <path d="M0 13.500h10M10 9.500h6M12.500 16v-5M10.500 13l2-2 2 2" />
        </Glyph>
        <Val n="0" u="px" label="Baseline shift" />
        <Drop aria-label="Baseline shift presets" />
        <span />
        <Glyph w={18} h={14}>
          <Tx x={5} y={10} s={10} b={false} sans>あ</Tx>
          <path d="M3.500 1v10M16.500 1v10" strokeDasharray="1 1" />
          <path d="M1 14.500h5M4 12.500l2 2-2 2M19 14.500h-5M16 12.500l-2 2 2 2" />
        </Glyph>
        <Val n="0" u="%" label="Tsume" />
        <Drop aria-label="Tsume presets" />
      </CharRow>
      <Rule />
      <StyleRow>
        <Tool $c={c.icon} aria-label="Faux bold">
          <Letter $s={17}>T</Letter>
        </Tool>
        <Tool $c={c.icon} aria-label="Faux italic">
          <Letter $s={17} $italic>
            T
          </Letter>
        </Tool>
        <Spacer $w={5} />
        <Tool $c={c.icon} aria-label="All caps">
          <Letter $s={16} $light>
            TT
          </Letter>
        </Tool>
        <Tool $c={c.icon} aria-label="Small caps">
          <Glyph w={20} h={14}>
            <Tx x={2} y={12} s={16} b={false}>T</Tx>
            <Tx x={12} y={12} s={12} b={false}>T</Tx>
          </Glyph>
        </Tool>
        <Spacer $w={5} />
        <Tool $c={c.icon} aria-label="Superscript">
          <Glyph w={16} h={14}>
            <Tx x={1} y={12} s={16} b={false}>T</Tx>
            <Tx x={11} y={6} s={8}>1</Tx>
          </Glyph>
        </Tool>
        <Tool $c={c.icon} aria-label="Subscript">
          <Glyph w={16} h={14}>
            <Tx x={1} y={12} s={16} b={false}>T</Tx>
            <Tx x={11} y={14} s={8}>1</Tx>
          </Glyph>
        </Tool>
      </StyleRow>
    </Body>
  </Panel>
);

const indentA = (
  <Glyph w={16} h={15}>
    <path d="M0 7.500h5M3 5.500l2 2-2 2M7.500 0v15M9 1.500h3M9 4.500h6M9 7.500h4M9 10.500h6M9 13.500h6" />
  </Glyph>
);
const indentB = (
  <Glyph w={16} h={15}>
    <path d="M16 7.500h-5M13 5.500l-2 2 2 2M8.500 0v15M0 1.500h6M0 4.500h4M0 7.500h6M0 10.500h4M0 13.500h6" />
  </Glyph>
);
const spaceA = (
  <Glyph w={16} h={15}>
    <path d="M0 3.500h5M3 1.500l2 2-2 2M7.500 1.500h8v4h-8zM7 8.500h9M7 11.500h7M7 14.500h9" />
  </Glyph>
);
const spaceB = (
  <Glyph w={16} h={15}>
    <path d="M0 13.500h5M3 11.500l2 2-2 2M7.500 11.500h8v4h-8zM7 2.500h7M7 5.500h9M7 8.500h7" />
  </Glyph>
);
const firstLine = (
  <Glyph w={16} h={15}>
    <path d="M0 1.500h5M3 -.5l2 2-2 2M9 1.500h5M6 4.500h10M6 7.500h8M6 10.500h10M6 13.500h10" />
  </Glyph>
);

const Paragraph = () => (
  <Panel>
    <Tab>
      <h2>Paragraph</h2>
      <MenuIcon label="Paragraph menu" />
    </Tab>
    <Body>
      <AlignRow>
        {aligns.map((a, i) => (
          <React.Fragment key={a.name}>
            {(i === 3 || i === 6) && <Spacer $w={5} />}
            <Tool $on={i === 1} $c={i === 1 ? '#2680eb' : c.icon} aria-label={a.name}>
              {bars(a.rows)}
            </Tool>
          </React.Fragment>
        ))}
      </AlignRow>
      <Rule $inset />
      <ParaGrid>
        {indentA}
        <Val n="0" u="px" label="Indent left" />
        {spaceA}
        <Val n="0" u="px" label="Space before" />
        {firstLine}
        <Val n="0" u="px" label="First line indent" />
        {indentB}
        <Val n="0" u="px" label="Indent right" />
        {spaceB}
        <Val n="0" u="px" label="Space after" />
      </ParaGrid>
    </Body>
  </Panel>
);

const Effects = () => (
  <Panel $w={206}>
    <Tab>
      <h2>Effects &amp; Presets</h2>
      <MenuIcon label="Effects menu" />
    </Tab>
    <EffectsSearch>
      <Field>
        <Lens arrow />
        <TextInput type="search" aria-label="Search effects" />
      </Field>
    </EffectsSearch>
    <EffectsMain>
      <EffectList>
        {effects.map((e) => (
          <Effect key={e}>
            <button>
              <Tri s={7} />
              {e}
            </button>
          </Effect>
        ))}
      </EffectList>
      <Strip />
    </EffectsMain>
    <EffectsFoot>
      <IconButton aria-label="New animation preset">
        <Glyph w={12} h={12}>
          <path d="M0 0h12v12H7V6H0z" {...F} />
          <path d="M0 7h5.500v5z" {...F} />
        </Glyph>
      </IconButton>
    </EffectsFoot>
  </Panel>
);

const TimelinePanel = () => (
  <Timeline>
    <Tab $pad={11}>
      <IconButton aria-label="Close timeline">
        <Close />
      </IconButton>
      <h2>(none)</h2>
      <MenuIcon label="Timeline menu" />
    </Tab>
    <Split>
      <Layers>
        <LayerTools>
          <LayerField $w={223}>
            <Lens arrow />
            <TextInput type="search" aria-label="Search layers" />
          </LayerField>
          <Slot $w={24}>
            <Glyph w={17} h={14}>
              <path d="M0 3.500h5M9 3.500h5M7.500 5v5.500H10" strokeWidth={1.5} />
              <path d="M3 2h4v3H3zM10 2h6v3h-6zM9 8h6v3H9zM11 12h6l-3 3z" {...F} />
            </Glyph>
          </Slot>
          <Spacer $w={8} />
          <Slot $w={26}>
            <Glyph w={17} h={17}>
              <path d="M5 0v9M1 4.500h8M2 1.500l6 6M8 1.500l-6 6" />
              <path d="M11 6.500l4.500 2v5L11 16l-4.500-2.500v-5zM6.500 8.500L11 11l4.500-2.500M11 11v5" strokeWidth={1.5} />
            </Glyph>
          </Slot>
          <Spacer $w={9} />
          <Slot $w={26}>
            <Glyph w={16} h={13}>
              <path fillRule="evenodd" d="M3 5a5 5 0 0 1 10 0v1H3zM5.500 3.500v1.200H7V3.500zM9 3.500v1.200h1.500V3.500z" {...F} />
              <path d="M8 5v4" strokeWidth={1.5} />
              <path d="M0 8h7v2h2V8h7v5H0z" {...F} opacity={0.6} />
            </Glyph>
          </Slot>
          <Slot $w={26}>
            <FilmStack />
          </Slot>
          <Slot $w={26}>
            <Blur />
          </Slot>
          <Spacer $w={8} />
          <Slot $w={26}>
            <Glyph w={16} h={15}>
              <path d="M.5 2.500h15v12H.5zM3.500 0v2M6.500 0v2M9.500 0v2M12.500 0v2M1 6h4l6 6h4" />
            </Glyph>
          </Slot>
        </LayerTools>
        <Table>
          <thead>
            <tr>
              <Th $w={69} $pad={4} aria-label="Video, audio, solo, lock">
                <Icons $gap={0}>
                  <Cell>
                    <Glyph w={11} h={8}>
                      <path fillRule="evenodd" d="M0 4q5.500-7.500 11 0-5.500 7.500-11 0zM5.500 2a2 2 0 1 0 .01 0z" {...F} />
                    </Glyph>
                  </Cell>
                  <Cell>
                    <Glyph w={12} h={11}>
                      <path d="M0 3h2.500L6 0v11L2.500 8H0z" {...F} />
                      <path d="M7.500 3.500q2 2 0 4M9 1q4 4.500 0 9" strokeWidth={1.5} />
                    </Glyph>
                  </Cell>
                  <Cell>
                    <Glyph w={7} h={7}>
                      <circle cx="3.5" cy="3.5" r="3.5" {...F} />
                    </Glyph>
                  </Cell>
                  <Cell>
                    <FaLock size={10} />
                  </Cell>
                </Icons>
              </Th>
              <Th $w={32} $pad={13} aria-label="Label">
                <FaTag size={12} color={c.icon} />
              </Th>
              <Th $w={33}>#</Th>
              <Th $w={130}>Source Name</Th>
              <Th $w={137} $pad={3} aria-label="Switches">
                <Icons $gap={0}>
                  <Cell>
                    <Shy />
                  </Cell>
                  <Cell>
                    <Glyph w={12} h={12}>
                      <circle cx="6" cy="6" r="2" />
                      <path d="M6 0v4M6 8v4M0 6h4M8 6h4M2.500 2.500l2 2M9.500 2.500l-2 2M2.500 9.500l2-2M9.500 9.500l-2-2" />
                    </Glyph>
                  </Cell>
                  <Cell>
                    <Glyph w={11} h={11}>
                      <path d="M0 .5h3v2h2.500v2.500H8v2.500h3V10" strokeWidth={1.5} strokeDasharray="3 1" />
                    </Glyph>
                  </Cell>
                  <Cell>
                    <Glyph w={12} h={13}>
                      <text x="1" y="10" fontSize="14" fontStyle="italic" fontFamily='"Liberation Serif", serif' fill="currentColor" stroke="none">fx</text>
                    </Glyph>
                  </Cell>
                  <Cell>
                    <FilmStack />
                  </Cell>
                  <Cell>
                    <Blur />
                  </Cell>
                  <Cell>
                    <Glyph w={11} h={11}>
                      <circle cx="5.5" cy="5.5" r="4.5" strokeWidth={1.5} />
                      <path d="M9 2A5 5 0 0 1 2 9z" {...F} />
                    </Glyph>
                  </Cell>
                  <Cell>
                    <Box size={13} />
                  </Cell>
                </Icons>
              </Th>
              <Th $w={117}>Parent</Th>
              <Th aria-label="More" />
            </tr>
          </thead>
        </Table>
      </Layers>
      <TimeArea>
        <WorkArea>
          <Handle aria-label="Work area start" />
          <Span />
          <Handle $end aria-label="Work area end" />
        </WorkArea>
        <Ruler>
          {Array.from({ length: 16 }, (_, i) => (
            <Mark key={i} />
          ))}
        </Ruler>
        <Lanes />
      </TimeArea>
      <Edge>
        <EdgeCell $c="#3e3e3e">
          <Glyph w={11} h={14}>
            <path d="M0 0h11v9l-5.500 5L0 9z" {...F} />
          </Glyph>
        </EdgeCell>
        <Line />
        <EdgeCell>
          <Glyph w={14} h={13}>
            <path d="M7 3h7v7H7z" {...F} />
            <path d="M0 8L7 1v8M4 7h4" strokeWidth={1.5} />
            <circle cx="6.5" cy="9.5" r="2.5" fill="#232323" strokeWidth={1.5} />
          </Glyph>
        </EdgeCell>
      </Edge>
    </Split>
    <TimelineFoot>
      <Icons $gap={6}>
        <Glyph w={12} h={12}>
          <path d="M.5 .5h6v6h-6zM3 3h6v6H3zM5.500 5.500h6v6h-6z" stroke="#2680eb" fill="#232323" />
          <path d="M8.500 7v3M7 8.500h3" stroke="#2680eb" />
        </Glyph>
        <Glyph w={12} h={12}>
          <circle cx="4" cy="4" r="3.5" />
          <path d="M5.500 4.500h6v7h-6z" fill="#232323" />
          <path d="M4 7.500A3.500 3.500 0 0 0 7.500 4" />
        </Glyph>
        <Glyph w={12} h={12}>
          <path d="M4 0h4v4l1 0 3 2-3 2H8v4H4V8H3L0 6l3-2h1z" {...F} />
          <path d="M6 0v12" stroke="#6e6e6e" />
        </Glyph>
      </Icons>
      <Spacer $w={211} />
      <FootButton $w={134} $s={11}>
        Toggle Switches / Modes
      </FootButton>
      <Spacer />
      <Glyph w={10} h={5}>
        <path d="M0 5l3-3 1 1 2.500-3L10 5z" fill="#3c3c3c" stroke="none" />
      </Glyph>
      <Range type="range" aria-label="Timeline zoom" min={0} max={100} defaultValue={0} />
      <Glyph w={16} h={8}>
        <path d="M0 8l5-6 1 1-4 5zM4 8l6-8 6 8z" fill="#3c3c3c" stroke="none" />
      </Glyph>
      <Spacer $w={5} />
    </TimelineFoot>
  </Timeline>
);

const contextItems = [
  { label: 'New Composition...', on: true },
  { label: 'New Folder' },
  { label: 'New Adobe Photoshop File...' },
  { label: 'New MAXON CINEMA 4D File...' },
  { label: 'Import', sub: true },
  { label: 'Import Recent Footage', sub: true, off: true },
];

export default function App() {
  return (
    <Shell>
      <GlobalStyle />
      <SystemBar />
      <TitleBar>
        <Lights>
          <Light $c="#fc5753" $e="#dc3a35" aria-label="Close">
            <Dot />
          </Light>
          <Light $c="#fdb62b" $e="#dd9a1a" aria-label="Minimize" />
          <Light $c="#2bc840" $e="#1ba52c" aria-label="Zoom" />
        </Lights>
        <h1>Adobe After Effects CC 2017 - Untitled Project *</h1>
      </TitleBar>
      <Tools />
      <Workarea>
        <TopRow>
          <Project />
          <Composition />
          <Column>
            <Info />
            <Character />
            <Paragraph />
          </Column>
          <Effects />
        </TopRow>
        <TimelinePanel />
      </Workarea>
      <ContextMenu role="menu">
        {contextItems.map((i) => (
          <ContextItem key={i.label} role="menuitem" $on={i.on} $off={i.off} disabled={i.off}>
            {i.label}
            {i.sub && <Tri s={8} />}
          </ContextItem>
        ))}
      </ContextMenu>
      <Highlight />
    </Shell>
  );
}
